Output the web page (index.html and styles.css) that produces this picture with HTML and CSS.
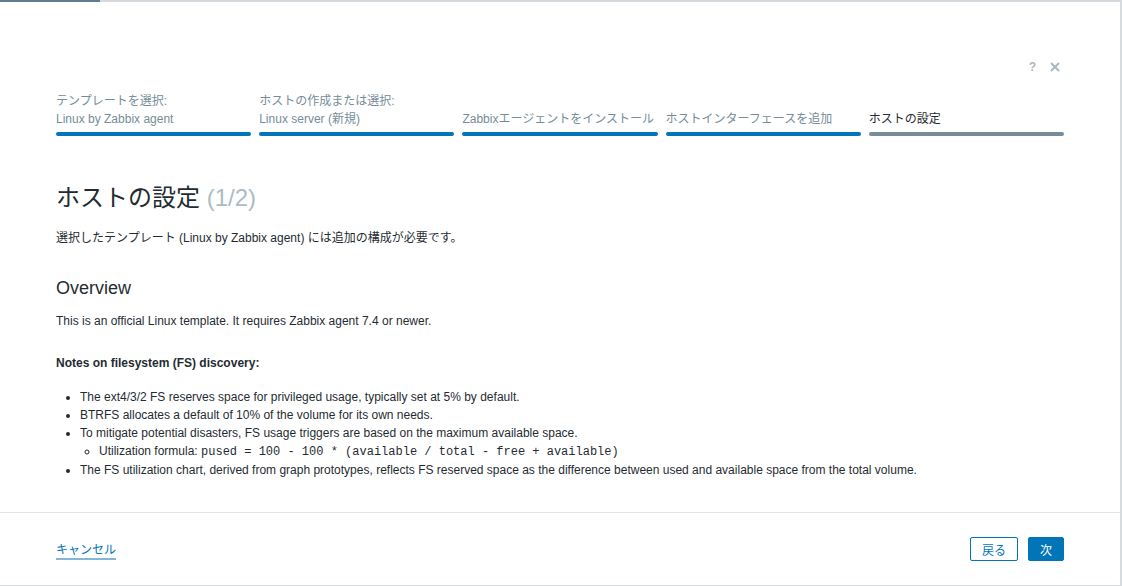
FILE: index.html
```html
<!DOCTYPE html>
<html lang="ja">
<head>
    <meta charset="UTF-8">
    <meta name="viewport" content="width=device-width, initial-scale=1.0">
    <title>ホストの設定</title>
    <link rel="stylesheet" href="styles.css">
</head>
<body>
    <div class="modal">
        <div class="top-strip">
            <div class="top-strip-dark"></div>
            <div class="top-strip-light"></div>
        </div>

        <div class="modal-body">
            <div class="head-tools">
                <span class="tool-help">?</span>
                <svg class="tool-close" width="10" height="10" viewBox="0 0 10 10">
                    <path d="M1 1 L9 9 M9 1 L1 9" stroke="#aab8c1" stroke-width="2" fill="none"/>
                </svg>
            </div>

            <div class="steps">
                <div class="step">
                    <div class="step-label">テンプレートを選択:<br>Linux by Zabbix agent</div>
                    <div class="step-bar"></div>
                </div>
                <div class="step">
                    <div class="step-label">ホストの作成または選択:<br>Linux server (新規)</div>
                    <div class="step-bar"></div>
                </div>
                <div class="step">
                    <div class="step-label">Zabbixエージェントをインストール</div>
                    <div class="step-bar"></div>
                </div>
                <div class="step">
                    <div class="step-label">ホストインターフェースを追加</div>
                    <div class="step-bar"></div>
                </div>
                <div class="step step-current">
                    <div class="step-label">ホストの設定</div>
                    <div class="step-bar"></div>
                </div>
            </div>

            <h1 class="title">ホストの設定 <span class="title-count">(1/2)</span></h1>
            <p class="intro">選択したテンプレート (Linux by Zabbix agent) には追加の構成が必要です。</p>

            <h2 class="section-title">Overview</h2>
            <p class="overview">This is an official Linux template. It requires Zabbix agent 7.4 or newer.</p>
            <p class="notes-title">Notes on filesystem (FS) discovery:</p>
            <ul class="notes">
                <li>The ext4/3/2 FS reserves space for privileged usage, typically set at 5% by default.</li>
                <li>BTRFS allocates a default of 10% of the volume for its own needs.</li>
                <li>To mitigate potential disasters, FS usage triggers are based on the maximum available space.
                    <ul class="notes-sub">
                        <li>Utilization formula: <code>pused = 100 - 100 * (available / total - free + available)</code></li>
                    </ul>
                </li>
                <li>The FS utilization chart, derived from graph prototypes, reflects FS reserved space as the difference between used and available space from the total volume.</li>
            </ul>
        </div>

        <div class="modal-footer">
            <a class="link-cancel" href="#">キャンセル</a>
            <div class="footer-buttons">
                <button class="btn-alt">戻る</button>
                <button class="btn-main">次</button>
            </div>
        </div>
    </div>
</body>
</html>
```

FILE: styles.css
```css
* {
    box-sizing: border-box;
}

body {
    margin: 0;
    font-family: "Liberation Sans", Arial, "Noto Sans CJK JP", sans-serif;
    font-size: 12px;
    line-height: 18px;
    color: #1f2c33;
    background: #ffffff;
}

.modal {
    width: 1122px;
    height: 586px;
    display: flex;
    flex-direction: column;
    background: #ffffff;
    border-right: 2px solid #d5dbdf;
    border-bottom: 1px solid #d5dbdf;
}

.top-strip {
    display: flex;
    height: 2px;
}

.top-strip-dark {
    width: 100px;
    background: #5e7d92;
}

.top-strip-light {
    flex: 1;
    background: #d3d9dd;
}

.modal-body {
    flex: 1;
    padding: 0 56px;
}

.head-tools {
    display: flex;
    justify-content: flex-end;
    align-items: center;
    gap: 14px;
    height: 20px;
    margin-top: 55px;
    padding-right: 4px;
}

.tool-help {
    color: #aab8c1;
    font-size: 12px;
    font-weight: bold;
}

.steps {
    display: grid;
    grid-template-columns: repeat(5, 1fr);
    gap: 8px;
    margin-top: 15px;
}

.step {
    display: flex;
    flex-direction: column;
    justify-content: flex-end;
}

.step-label {
    color: #768d99;
    white-space: nowrap;
}

.step-bar {
    height: 4px;
    margin-top: 4px;
    border-radius: 2px;
    background: #0275b8;
}

.step-current .step-label {
    color: #1f2c33;
}

.step-current .step-bar {
    background: #768d99;
}

.title {
    margin: 47px 0 0;
    font-size: 24px;
    line-height: 30px;
    font-weight: normal;
}

.title-count {
    color: #acbbc4;
}

.intro {
    margin: 16px 0 0;
}

.section-title {
    margin: 30px 0 0;
    font-size: 18px;
    line-height: 22px;
    font-weight: normal;
}

.overview {
    margin: 13px 0 0;
}

.notes-title {
    margin: 24px 0 0;
    font-weight: bold;
}

.notes {
    margin: 16px 0 0;
    padding-left: 24px;
}

.notes-sub {
    margin: 0;
    padding-left: 19px;
    list-style-type: circle;
}

code {
    font-family: "Liberation Mono", "Courier New", monospace;
    font-size: 12px;
}

.modal-footer {
    height: 73px;
    display: flex;
    justify-content: space-between;
    align-items: center;
    padding: 0 56px;
    border-top: 1px solid #dfe4e7;
}

.link-cancel {
    margin-top: 3px;
    color: #0275b8;
    text-decoration: none;
    border-bottom: 2px solid #84b6d6;
    line-height: 16px;
}

.footer-buttons {
    display: flex;
    gap: 10px;
}

button {
    height: 24px;
    font-family: inherit;
    font-size: 12px;
    border-radius: 2px;
    cursor: pointer;
}

.btn-alt {
    padding: 0 11px;
    background: #ffffff;
    color: #0275b8;
    border: 1px solid #0275b8;
}

.btn-main {
    padding: 0 11px;
    background: #0275b8;
    color: #ffffff;
    border: 1px solid #0275b8;
}
```
